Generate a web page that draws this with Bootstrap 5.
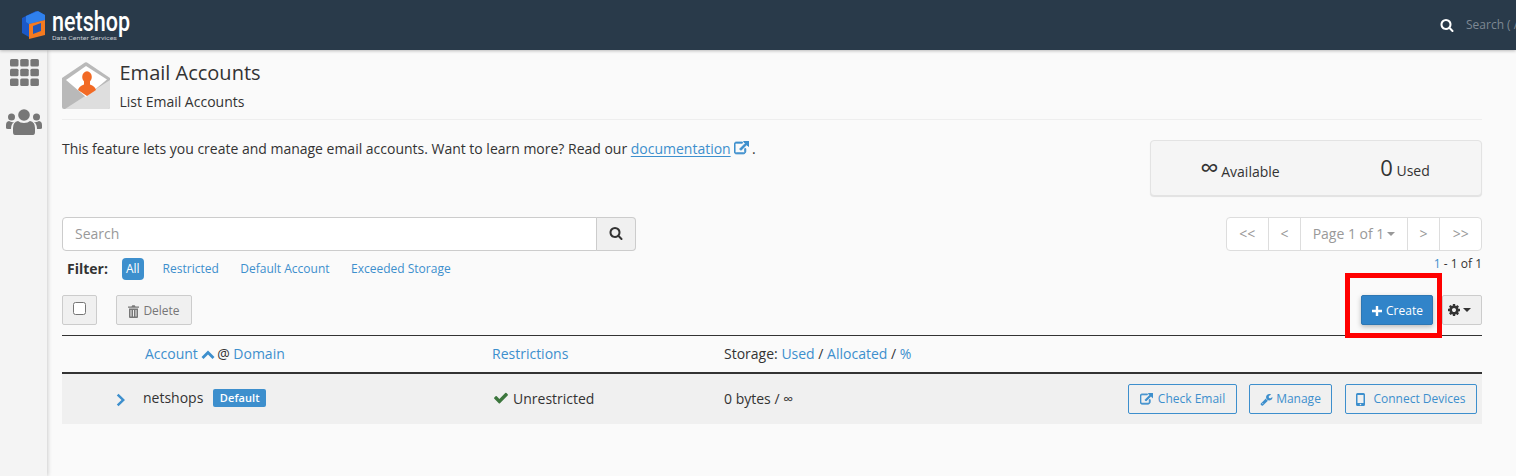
<!DOCTYPE html>
<html lang="en">
<head>
<meta charset="utf-8">
<title>Email Accounts</title>
<link href="https://cdn.jsdelivr.net/npm/bootstrap@5.3.0/dist/css/bootstrap.min.css" rel="stylesheet">
<style>
html,body{height:476px;overflow:hidden}
body{font-family:"Open Sans",sans-serif;font-size:14px;line-height:20px;color:#333;background:#fafafa}
a{color:#3d8fcd;text-decoration:none}
svg{flex:none}
.topbar{height:50px;background:#293a4a;flex-wrap:nowrap;position:relative;z-index:2;box-shadow:0 1px 3px rgba(0,0,0,.25)}
.brandbox{width:140px;height:50px;flex:none}
.topsearch{width:76px;overflow:hidden;white-space:nowrap;color:#7d8893;font-size:12px;gap:12px;flex:none}
.shell{height:426px}
.sidenav{width:47px;background:#f4f4f4;box-shadow:1px 0 4px rgba(0,0,0,.18);padding:9px 0 0 1px;gap:23px;flex:none}
.pagebody{padding:12px 34px 0 15px;min-width:0}
.heading{height:58px;border-bottom:1px solid #eee;gap:10px}
.heading h1{font-size:20px;line-height:24px;font-weight:400;margin:-1px 0 0 -.5px}
.subhead{line-height:20px;margin:7px 0 0 -.5px}
.intro{padding-top:19px;height:97px}
.intro p{margin:0;letter-spacing:-.01px}
.intro a u{text-underline-offset:2px}
.docicon{vertical-align:-2px;margin-right:-1px}
.statbox{width:332px;height:56px;margin-top:1px;background:#f5f5f5;border:1px solid #e3e3e3;border-radius:4px;box-shadow:0 1px 1px rgba(0,0,0,.1);flex:none;padding-bottom:2px}
.statnum{font-size:22px;line-height:24px}
.statinf{font-size:26px;margin-right:-1px}
.statcell{padding-top:2px}
.statleft{width:178px}
.statright{width:152px}
.searchgrp{width:574px;height:34px}
.searchinput{height:34px;font-size:14px;padding:5px 12px 7px;border-color:#ccc;border-radius:4px 0 0 4px;background:#fff;font-family:inherit}
.searchinput::placeholder{color:#999}
.searchbtn{width:40px;height:34px;border:1px solid #ccc;border-left:0;background:#f0f0f0;border-radius:0 4px 4px 0;padding:0 0 4px}
.pager{height:34px;border:1px solid #ddd;border-radius:4px;background:#fff;color:#999;width:256px}
.pager>span{border-left:1px solid #ddd;height:100%;display:flex;align-items:center;justify-content:center;font-size:14px}
.pager>span:first-child{border-left:0}
.caretmini{display:inline-block;border-top:4px solid currentColor;border-left:4px solid transparent;border-right:4px solid transparent;margin-left:3px;vertical-align:middle}
.filterrow{height:44px;font-size:12px;position:relative}
.filterstrip{height:36px;margin-top:-2px}
.filterlabel{font-weight:700;font-size:14px;margin:0 14px 0 5px}
.pillall{background:#3d8fcd;color:#fff;border-radius:4px;padding:1px 4px;height:22px;margin-right:19px;line-height:20px}
.filterlink{margin-right:21.500px}
.countline{font-size:12px;line-height:16px;padding-top:5px}
.toolrow{height:41px;border-bottom:1px solid #333;position:relative}
.toolbtn{height:30px;background:#f0f0f0;border:1px solid #ccc;border-radius:2px;font-size:12px;color:#777;padding:0}
.selectbtn{width:35px;align-items:flex-start;padding-top:6px}
.deletebtn{width:76px;margin-left:19px;gap:4px;color:#777;padding-top:2px}
.checkmini{width:13px;height:13px;border:1px solid #767676;border-radius:2.5px;background:#fff;display:block}
.createbtn{height:30px;width:72px;background:#3184c9;border:1px solid #2e77b3;border-radius:2px;color:#fff;font-size:12px;gap:3px;box-shadow:0 2px 5px rgba(0,0,0,.25);padding:2px 0 0}
.gearbtn{width:40px;margin-left:9px;color:#333;gap:2px;padding-right:6px}
.redframe{position:absolute;left:1283px;top:-22px;width:97px;height:65px;border:5px solid #f00;pointer-events:none}
.headrow{height:38px;border-bottom:2px solid #333}
.tablerow{height:50px;background:#f0f0f0}
.c-a{width:430px;padding-left:83px;flex:none}
.c-b{width:232px;flex:none}
.c-c{flex:1 1 auto}
.sortcaret{margin:0 -1px 0 -1px}
.chev{margin-left:-29px;margin-right:18px;width:10px;margin-top:1px}
.rowname{margin-left:-1px;margin-top:-3px}
.tagdefault{background:#3d8fcd;color:#fff;font-size:11px;line-height:14px;font-weight:600;padding:2px 6.500px;border-radius:2px;margin:-2px 0 0 10px;letter-spacing:.1px}
.okcheck{margin-left:1px}
.actionbtn{height:30px;border:1px solid #3d8fcd;border-radius:2px;color:#3d8fcd;font-size:12px;padding:0;background:transparent;gap:5px}
.managebtn{width:83px;gap:3px;margin-right:1px}
.rowactions{gap:12px;padding-right:5px;flex:none}
</style>
</head>
<body>
<nav class="navbar topbar d-flex align-items-center p-0">
  <div class="brandbox">
    <svg width="140" height="50" viewBox="0 0 140 50" role="img" aria-label="netshop">
      <polygon points="22,18 36,11 45,15 45,22 29,26 29,37 22,33" fill="#1b58c8"/>
      <polygon points="26,16 38,11 45,15 45,20 29,24 26,22" fill="#2f80ec"/>
      <polygon points="29,24 45,20 45,35 29,39" fill="#f47a20"/>
      <polygon points="33,26 41,23 41,31 33,34" fill="#1f56b8"/>
      <text x="52" y="31" fill="#fff" font-family="Roboto,sans-serif" font-size="27" font-weight="500" textLength="78" lengthAdjust="spacingAndGlyphs">netshop</text>
      <text x="52" y="39.500" fill="#c7ccd2" font-family="Roboto,sans-serif" font-size="5.500" textLength="65" lengthAdjust="spacingAndGlyphs">Data Center Services</text>
    </svg>
  </div>
  <div class="topsearch ms-auto d-flex align-items-center">
    <svg width="14" height="14" viewBox="0 0 1792 1792" fill="#fff"><path d="M1216 832q0-185-131.500-316.500T768 384 451.500 515.500 320 832t131.500 316.500T768 1280t316.500-131.500T1216 832zm512 832q0 52-38 90t-90 38q-54 0-90-38l-343-342q-179 124-399 124-143 0-273.500-55.500t-225-150-150-225T64 832t55.500-273.500 150-225 225-150T768 128t273.500 55.500 225 150 150 225T1472 832q0 220-124 399l343 343q37 37 37 90z"/></svg>
    <span>Search ( / )</span>
  </div>
</nav>
<div class="shell d-flex">
  <aside class="sidenav d-flex flex-column align-items-center">
    <svg width="29" height="27" viewBox="0 0 29 27" fill="#777"><rect width="8.500" height="7.500" rx="1.500"/><rect x="10.200" width="8.500" height="7.500" rx="1.500"/><rect x="20.400" width="8.500" height="7.500" rx="1.500"/><rect y="9.700" width="8.500" height="7.500" rx="1.500"/><rect x="10.200" y="9.700" width="8.500" height="7.500" rx="1.500"/><rect x="20.400" y="9.700" width="8.500" height="7.500" rx="1.500"/><rect y="19.400" width="8.500" height="7.500" rx="1.500"/><rect x="10.200" y="19.400" width="8.500" height="7.500" rx="1.500"/><rect x="20.400" y="19.400" width="8.500" height="7.500" rx="1.500"/></svg>
    <svg width="36" height="26" viewBox="0 0 36 26" fill="#777"><circle cx="18" cy="6" r="5.800"/><circle cx="5.500" cy="8" r="3.500"/><circle cx="30.500" cy="8" r="3.500"/><path d="M9 26q-2 0-2-3v-4q0-6 5-7 2 2 6 2t6-2q5 1 5 7v4q0 3-2 3z"/><path d="M0 19v-3q0-3.500 3-4 2 1.500 5 1-3 2-3 7H2q-2 0-2-1zM36 19v-3q0-3.500-3-4-2 1.500-5 1 3 2 3 7h3q2 0 2-1z"/></svg>
  </aside>
  <main class="pagebody flex-grow-1">
    <header class="heading d-flex">
      <svg width="48" height="48" viewBox="0 0 48 48">
        <path d="M0 16 23 .5q1-.5 2 0L48 16v29q0 2-2 2H2q-2 0-2-2z" fill="#b9b9b9"/>
        <path d="M48 18v27q0 2-2 2H3z" fill="#dedede"/>
        <polygon points="24,4 45,17.500 24,35 4,18" fill="#fff"/>
        <ellipse cx="25" cy="15" rx="4.800" ry="5.800" fill="#f26a25"/>
        <path d="M16 28q1-4 6-5.500V19h6v3.500q5 1.500 6 5.500l-9 6z" fill="#f26a25"/>
      </svg>
      <div>
        <h1>Email Accounts</h1>
        <div class="subhead">List Email Accounts</div>
      </div>
    </header>
    <section class="intro d-flex justify-content-between">
      <p>This feature lets you create and manage email accounts. Want to learn more? Read our <a href="#"><u>documentation</u> <svg class="docicon" width="15" height="15" viewBox="0 0 1792 1792" fill="#3d8fcd" stroke="#3d8fcd" stroke-width="110"><path d="M1408 928v320q0 119-84.500 203.500T1120 1536H288q-119 0-203.500-84.500T0 1248V416q0-119 84.500-203.500T288 128h704q14 0 23 9t9 23v64q0 14-9 23t-23 9H288q-66 0-113 47t-47 113v832q0 66 47 113t113 47h832q66 0 113-47t47-113V928q0-14 9-23t23-9h64q14 0 23 9t9 23zm384-864v512q0 26-19 45t-45 19-45-19l-176-176-652 652q-10 10-23 10t-23-10L695 983q-10-10-10-23t10-23l652-652-176-176q-19-19-19-45t19-45 45-19h512q26 0 45 19t19 45z"/></svg></a> .</p>
      <div class="statbox d-flex align-items-center">
        <div class="statcell statleft text-center"><span class="statnum statinf">∞</span> Available</div>
        <div class="statcell statright text-center"><span class="statnum">0</span> Used</div>
      </div>
    </section>
    <section class="d-flex justify-content-between">
      <div class="searchgrp input-group flex-nowrap">
        <input class="form-control searchinput shadow-none" type="text" placeholder="Search" aria-label="Search">
        <button class="searchbtn" type="button" aria-label="Search">
          <svg width="14" height="14" viewBox="0 0 1792 1792" fill="#333"><path d="M1216 832q0-185-131.500-316.500T768 384 451.500 515.500 320 832t131.500 316.500T768 1280t316.500-131.500T1216 832zm512 832q0 52-38 90t-90 38q-54 0-90-38l-343-342q-179 124-399 124-143 0-273.500-55.500t-225-150-150-225T64 832t55.500-273.500 150-225 225-150T768 128t273.500 55.500 225 150 150 225T1472 832q0 220-124 399l343 343q37 37 37 90z"/></svg>
        </button>
      </div>
      <div class="pager d-flex">
        <span style="width:41px">&lt;&lt;</span><span style="width:33px">&lt;</span><span style="width:107px">Page 1 of 1<i class="caretmini"></i></span><span style="width:33px">&gt;</span><span style="width:42px">&gt;&gt;</span>
      </div>
    </section>
    <section class="filterrow d-flex justify-content-between">
      <div class="filterstrip d-flex align-items-center pt-1 align-self-start">
        <b class="filterlabel">Filter:</b>
        <span class="pillall">All</span>
        <a class="filterlink" href="#">Restricted</a>
        <a class="filterlink" href="#">Default Account</a>
        <a class="filterlink" href="#">Exceeded Storage</a>
      </div>
      <div class="countline"><a href="#">1</a> - 1 of 1</div>
    </section>
    <section class="toolrow d-flex">
      <button class="toolbtn selectbtn d-flex justify-content-center" type="button" aria-label="Select all"><span class="checkmini"></span></button>
      <button class="toolbtn deletebtn d-flex align-items-center justify-content-center" type="button">
        <svg width="11" height="13" viewBox="0 0 11 13" fill="#777"><path d="M3.500 1.500 4.300.3h2.400l.8 1.200H11v1.200H0V1.500zM1 3.500h9V12q0 1-1 1H2q-1 0-1-1zm1.500 1.500v6.500h1V5zm2.500 0v6.500h1V5zm2.500 0v6.500h1V5z" fill-rule="evenodd"/></svg>
        Delete
      </button>
      <div class="ms-auto d-flex">
        <button class="createbtn d-flex align-items-center justify-content-center" type="button">
          <svg width="12" height="12" viewBox="0 0 12 12" fill="#fff"><path d="M4.800 1h2.400v3.800H11v2.400H7.200V11H4.800V7.200H1V4.800h3.800z"/></svg>
          Create
        </button>
        <button class="toolbtn gearbtn d-flex align-items-center justify-content-center" type="button" aria-label="Settings">
          <svg width="14" height="14" viewBox="0 0 1792 1792" fill="#333"><path d="M1152 896q0-106-75-181t-181-75-181 75-75 181 75 181 181 75 181-75 75-181zm512-109v222q0 12-8 23t-20 13l-185 28q-19 54-39 91 35 50 107 138 10 12 10 25t-9 23q-27 37-99 108t-94 71q-12 0-26-9l-138-108q-44 23-91 38-16 136-29 186-7 28-36 28H785q-14 0-24.500-8.500T749 1634l-28-184q-49-16-90-37l-141 107q-10 9-25 9-14 0-25-11-126-114-165-168-7-10-7-23 0-12 8-23 15-21 51-66.500t54-70.500q-27-50-41-99l-183-27q-13-2-21-12.500t-8-23.500V783q0-12 8-23t19-13l186-28q14-46 39-92-40-57-107-138-10-12-10-24 0-10 9-23 26-36 98.500-107.500T465 263q13 0 26 10l138 107q44-23 91-38 16-136 29-186 7-28 36-28h222q14 0 24.500 8.500T1043 158l28 184q49 16 90 37l142-107q9-9 24-9 13 0 25 10 129 119 165 170 7 8 7 22 0 12-8 23-15 21-51 66.500t-54 70.500q26 50 41 98l183 28q13 2 21 12.500t8 23.500z"/></svg>
          <i class="caretmini m-0"></i>
        </button>
      </div>
      <div class="redframe"></div>
    </section>
    <section class="headrow d-flex align-items-center">
      <div class="c-a"><a href="#">Account <svg class="sortcaret" width="14" height="10" viewBox="0 0 14 10" fill="#3d8fcd"><path d="M7 .5 13.500 7 11.500 9 7 4.500 2.500 9 .5 7z"/></svg></a> @ <a href="#">Domain</a></div>
      <div class="c-b"><a href="#">Restrictions</a></div>
      <div class="c-c">Storage: <a href="#">Used</a> / <a href="#">Allocated</a> / <a href="#">%</a></div>
    </section>
    <section class="tablerow d-flex align-items-center">
      <div class="c-a d-flex align-items-center">
        <svg class="chev" width="10" height="14" viewBox="0 0 10 14" fill="#3d8fcd"><path d="M2.500 .8 9 7l-6.500 6.200L.8 11.400 5.500 7 .8 2.600z"/></svg>
        <span class="rowname">netshops</span><span class="tagdefault">Default</span>
      </div>
      <div class="c-b d-flex align-items-center gap-1">
        <svg class="okcheck" width="16" height="14" viewBox="0 0 1792 1536" fill="#3c763d"><path d="M1671 310q0 40-28 68l-724 724-136 136q-28 28-68 28t-68-28l-136-136-362-362q-28-28-28-68t28-68l136-136q28-28 68-28t68 28l294 295 656-657q28-28 68-28t68 28l136 136q28 28 28 68z"/></svg>
        <span>Unrestricted</span>
      </div>
      <div class="c-c">0 bytes / ∞</div>
      <div class="rowactions d-flex">
        <a href="#" class="actionbtn d-flex align-items-center justify-content-center" style="width:109px">
          <svg width="13" height="13" viewBox="0 0 1792 1792" fill="#3d8fcd" stroke="#3d8fcd" stroke-width="110"><path d="M1408 928v320q0 119-84.500 203.500T1120 1536H288q-119 0-203.500-84.500T0 1248V416q0-119 84.500-203.500T288 128h704q14 0 23 9t9 23v64q0 14-9 23t-23 9H288q-66 0-113 47t-47 113v832q0 66 47 113t113 47h832q66 0 113-47t47-113V928q0-14 9-23t23-9h64q14 0 23 9t9 23zm384-864v512q0 26-19 45t-45 19-45-19l-176-176-652 652q-10 10-23 10t-23-10L695 983q-10-10-10-23t10-23l652-652-176-176q-19-19-19-45t19-45 45-19h512q26 0 45 19t19 45z"/></svg>
          Check Email
        </a>
        <a href="#" class="actionbtn managebtn d-flex align-items-center justify-content-center">
          <svg width="13" height="13" viewBox="0 0 1792 1792" fill="#3d8fcd"><path d="M448 1472q0-26-19-45t-45-19-45 19-19 45 19 45 45 19 45-19 19-45zm644-420l-682 682q-37 37-90 37-52 0-91-37l-106-108q-38-36-38-90 0-53 38-91l681-681q39 98 114.500 173.500T1092 1052zm634-435q0 39-23 106-47 134-164.500 217.500T1280 1024q-185 0-316.500-131.500T832 576t131.500-316.500T1280 128q58 0 121.500 16.500T1509 191q16 11 16 28t-16 28l-293 169v224l193 107q5-3 79-48.500t135.500-81T1684 582q15 0 23.500 10t8.500 25z"/></svg>
          Manage
        </a>
        <a href="#" class="actionbtn d-flex align-items-center justify-content-center" style="width:132px;gap:8px">
          <svg width="9" height="13" viewBox="0 0 9 13" fill="#3d8fcd"><path fill-rule="evenodd" d="M1.500 0h6Q9 0 9 1.500v10Q9 13 7.500 13h-6Q0 13 0 11.500v-10Q0 0 1.500 0zM1.500 2v8h6V2zm3 8.700a.8.8 0 1 0 0 1.600.8.8 0 0 0 0-1.600z"/></svg>
          Connect Devices
        </a>
      </div>
    </section>
  </main>
</div>
<script src="https://cdn.jsdelivr.net/npm/bootstrap@5.3.0/dist/js/bootstrap.bundle.min.js"></script>
</body>
</html>
